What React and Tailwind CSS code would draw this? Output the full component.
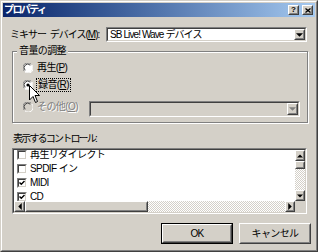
import React from "react";

const Raised = ({ className = "", children, innerClass = "" }) => (
  <div className={`border border-t-white border-l-white border-b-[#404040] border-r-[#404040] bg-[#d4d0c8] ${className}`}>
    <div className={`w-full h-full border border-t-[#d4d0c8] border-l-[#d4d0c8] border-b-[#808080] border-r-[#808080] flex items-center justify-center ${innerClass}`}>
      {children}
    </div>
  </div>
);

const Sunken = ({ className = "", children, innerClass = "" }) => (
  <div className={`border border-t-[#808080] border-l-[#808080] border-b-white border-r-white ${className}`}>
    <div className={`w-full h-full border border-t-[#404040] border-l-[#404040] border-b-[#d4d0c8] border-r-[#d4d0c8] ${innerClass}`}>
      {children}
    </div>
  </div>
);

const Tri = ({ dir = "down", color = "#000" }) => {
  const pts = {
    down: "0,0 6,0 3,3",
    up: "0,3 6,3 3,0",
    left: "3,0 3,6 0,3",
    right: "0,0 0,6 3,3",
  }[dir];
  const w = dir === "left" || dir === "right" ? 3 : 6;
  const h = dir === "left" || dir === "right" ? 6 : 3;
  return (
    <svg width={w + 1} height={h + 1} viewBox={`0 0 ${w} ${h}`} className="block">
      <polygon points={pts} fill={color} />
    </svg>
  );
};

const Radio = ({ checked = false, disabled = false }) => (
  <svg width="10" height="10" viewBox="0 0 10 10" className="block shrink-0">
    <circle cx="5" cy="5" r="4.5" fill={disabled ? "#d4d0c8" : "#fff"} />
    <path d="M1.3 8.2 A4.5 4.5 0 0 1 8.2 1.3" fill="none" stroke="#808080" strokeWidth="1" />
    <path d="M2.2 7.3 A3.4 3.4 0 0 1 7.3 2.2" fill="none" stroke="#404040" strokeWidth="1" />
    <path d="M8.7 1.8 A4.5 4.5 0 0 1 1.8 8.7" fill="none" stroke="#ffffff" strokeWidth="1" />
    {checked && <circle cx="5" cy="5" r="1.6" fill="#000" />}
  </svg>
);

const Check = ({ checked }) => (
  <Sunken className="w-[10px] h-[10px] shrink-0" innerClass="bg-white flex items-center justify-center">
    {checked && (
      <svg width="6" height="6" viewBox="0 0 6 6" className="block">
        <path d="M0.5 2.5 L2.3 4.3 L5.5 1" fill="none" stroke="#000" strokeWidth="1.4" />
      </svg>
    )}
  </Sunken>
);

const U = ({ children }) => <span className="underline underline-offset-1">{children}</span>;

export default function App() {
  return (
    <div className="relative w-[318px] h-[252px] bg-[#d4d0c8] font-['Liberation_Sans','Noto_Sans_CJK_JP',sans-serif] text-[10px] leading-none tracking-[-0.6px] whitespace-nowrap text-black overflow-hidden">
      <div className="w-full h-full border border-t-[#d4d0c8] border-l-[#d4d0c8] border-b-[#404040] border-r-[#404040]">
        <div className="w-full h-full border border-t-white border-l-white border-b-[#808080] border-r-[#808080] p-px flex flex-col">
          {/* Title bar */}
          <div className="h-[14px] shrink-0 flex items-center bg-gradient-to-r from-[#0a246a] to-[#a6caf0] pl-[1px] pr-[2px]">
            <span className="text-white font-bold text-[10px] tracking-[-1.6px]">プロパティ</span>
            <div className="ml-auto flex gap-[3px]">
              <Raised className="w-[11px] h-[10px]">
                <span className="font-bold text-[8px] leading-none tracking-normal">?</span>
              </Raised>
              <Raised className="w-[11px] h-[10px]">
                <svg width="6" height="5" viewBox="0 0 6 5" className="block">
                  <path d="M0.5 0.5 L5.5 4.5 M5.5 0.5 L0.5 4.5" stroke="#000" strokeWidth="1.3" />
                </svg>
              </Raised>
            </div>
          </div>

          {/* Mixer device row */}
          <div className="mt-[10px] h-[15px] flex items-center">
            <div className="w-[103px] pl-[7px] tracking-[-1px]">
              ミキサー <span className="ml-[2px]">デバイス(<U>M</U>):</span>
            </div>
            <Sunken className="w-[201px] h-[15px]" innerClass="bg-white flex items-center">
              <span className="pl-[2px] tracking-[-0.9px]">SB Live! Wave デバイス</span>
              <Raised className="ml-auto w-[11px] h-[11px]">
                <Tri dir="down" />
              </Raised>
            </Sunken>
          </div>

          {/* Group box */}
          <div className="relative mt-[9px] ml-[9px] w-[296px] h-[72px] border border-[#808080] shadow-[inset_1px_1px_0_#fff,1px_1px_0_#fff]">
            <span className="absolute left-[4px] top-[-6px] bg-[#d4d0c8] px-[2px]">音量の調整</span>
            <div className="flex flex-col pt-[11px] pl-[10px]">
              <div className="h-[10px] flex items-center gap-[4px]">
                <Radio />
                <span>
                  再生(<U>P</U>)
                </span>
              </div>
              <div className="mt-[7px] h-[10px] flex items-center gap-[3px]">
                <Radio checked />
                <span className="border border-dotted border-black px-[1px] py-[1px]">
                  録音(<U>R</U>)
                </span>
              </div>
              <div className="mt-[11px] h-[16px] flex items-start">
                <div className="mt-[1px] flex items-center gap-[4px] text-[#808080] [text-shadow:1px_1px_0_#fff]">
                  <Radio disabled />
                  <span>
                    その他(<U>O</U>)
                  </span>
                </div>
                <Sunken className="ml-auto mr-[7px] w-[211px] h-[16px]" innerClass="bg-[#d4d0c8] flex items-center justify-end">
                  <Raised className="w-[11px] h-[12px]">
                    <Tri dir="down" color="#808080" />
                  </Raised>
                </Sunken>
              </div>
            </div>
          </div>

          {/* List label */}
          <div className="mt-[10px] ml-[10px] h-[11px] flex items-center tracking-[-1.8px]">表示するコントロール:</div>

          {/* Listbox */}
          <Sunken className="mt-[4px] ml-[9px] w-[295px] h-[66px]" innerClass="bg-white grid grid-cols-[1fr_10px] grid-rows-[1fr_11px] overflow-hidden">
            <div className="overflow-hidden flex flex-col pl-[3px] -mt-[2px]">
              {[
                ["再生リダイレクト", false],
                ["SPDIF イン", false],
                ["MIDI", true],
                ["CD", true],
              ].map(([t, c]) => (
                <div key={t} className="h-[14px] shrink-0 flex items-center gap-[3px]">
                  <Check checked={c} />
                  <span>{t}</span>
                </div>
              ))}
            </div>
            <div className="flex flex-col bg-[image:repeating-conic-gradient(#d4d0c8_0_25%,#ffffff_0_50%)] bg-[length:2px_2px]">
              <Raised className="w-[10px] h-[11px] shrink-0">
                <Tri dir="up" />
              </Raised>
              <Raised className="w-[10px] h-[8px] shrink-0" />
              <div className="flex-1" />
              <Raised className="w-[10px] h-[11px] shrink-0">
                <Tri dir="down" />
              </Raised>
            </div>
            <div className="flex bg-[image:repeating-conic-gradient(#d4d0c8_0_25%,#ffffff_0_50%)] bg-[length:2px_2px]">
              <Raised className="w-[11px] h-[11px] shrink-0">
                <Tri dir="left" />
              </Raised>
              <Raised className="w-[123px] h-[11px] shrink-0" />
              <div className="flex-1" />
              <Raised className="w-[10px] h-[11px] shrink-0">
                <Tri dir="right" />
              </Raised>
            </div>
            <div className="bg-[#d4d0c8]" />
          </Sunken>

          {/* Buttons */}
          <div className="mt-[9px] flex justify-end gap-[6px] pr-[4px]">
            <div className="w-[72px] h-[21px] border border-black">
              <Raised className="w-full h-full">
                <span>OK</span>
              </Raised>
            </div>
            <Raised className="w-[72px] h-[21px]">
              <span>キャンセル</span>
            </Raised>
          </div>
        </div>
      </div>

      {/* Mouse cursor */}
      <svg width="12" height="19" viewBox="0 0 12 19" className="absolute left-[29px] top-[85px]">
        <path d="M0.5 0.5 L0.5 15 L4 11.5 L6.5 17.5 L8.5 16.5 L6 10.5 L10.5 10.5 Z" fill="#fff" stroke="#000" strokeWidth="1" strokeLinejoin="miter" />
      </svg>
    </div>
  );
}
